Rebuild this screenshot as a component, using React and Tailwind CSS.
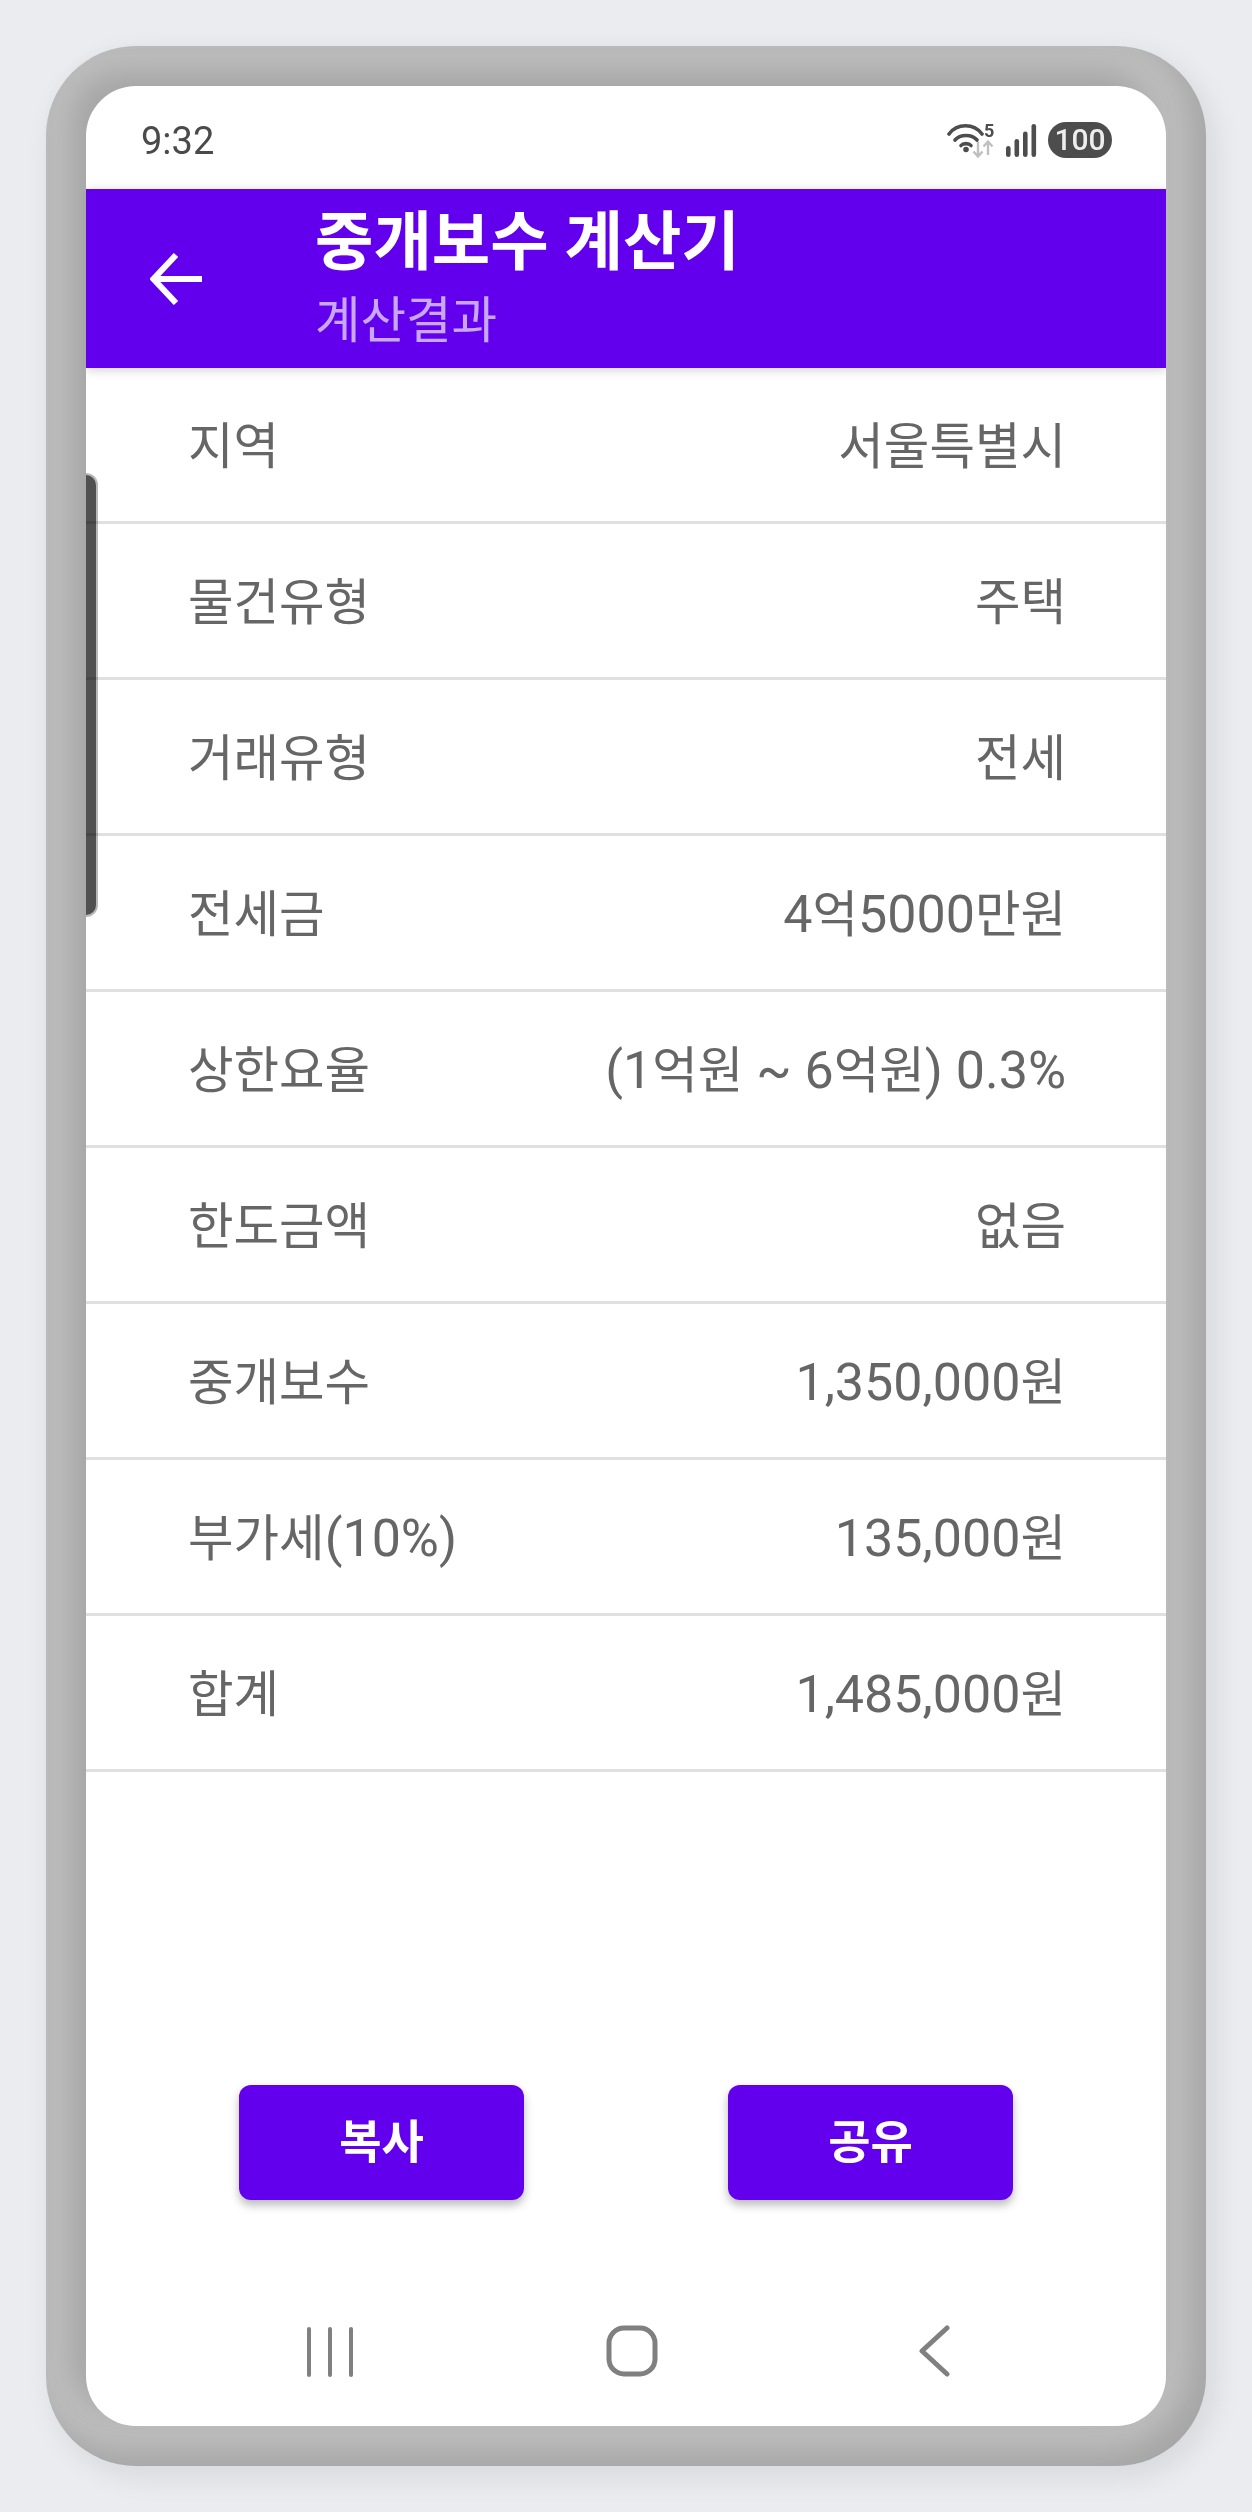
const rows = [
  ["지역", "서울특별시"],
  ["물건유형", "주택"],
  ["거래유형", "전세"],
  ["전세금", "4억5000만원"],
  ["상한요율", "(1억원 ~ 6억원) 0.3%"],
  ["한도금액", "없음"],
  ["중개보수", "1,350,000원"],
  ["부가세(10%)", "135,000원"],
  ["합계", "1,485,000원"]
];

// hangul runs sit a bit smaller than the latin digits next to them
function RowText({ children }) {
  return (
    <span className="text-[52px] leading-[60px]">
      {children.split(/([가-힣]+)/).map((part, i) =>
        /[가-힣]/.test(part) ? (
          <span key={i} className="text-[49.5px]">{part}</span>
        ) : (
          <span key={i}>{part}</span>
        )
      )}
    </span>
  );
}

function StatusIcons() {
  return (
    <div className="flex items-center">
      <div className="relative mr-[8px] h-[36px] w-[50px]">
        <svg width="50" height="36" viewBox="0 0 50 36" fill="none">
          <g stroke="#4d4d4d" strokeWidth="3.6" strokeLinecap="round">
            <path d="M2 12C10 1 27 1 35 12" />
            <path d="M8 18C13 12 25 12 30 18" />
            <path d="M14 23.5C16 21 22 21 24 23.5" />
          </g>
          <circle cx="19" cy="27.5" r="2.8" fill="#4d4d4d" />
          <g stroke="#c0c0c0" strokeWidth="2.4" fill="none">
            <path d="M31 20V34M26.5 29.5L31 34.5L35.5 29.5" />
            <path d="M41 33V20M36.5 24.5L41 19.5L45.5 24.5" />
          </g>
        </svg>
        <span className="absolute left-[37px] top-0 text-[18px] font-bold leading-[18px] text-[#4d4d4d]">5</span>
      </div>
      <svg width="32" height="36" viewBox="0 0 32 36" className="mr-[11px]">
        <g fill="#4d4d4d">
          <rect x="1" y="24" width="4.6" height="11" rx="2.3" />
          <rect x="9.5" y="17" width="4.6" height="18" rx="2.3" />
          <rect x="18" y="9.5" width="4.6" height="25.5" rx="2.3" />
          <rect x="26.5" y="2" width="4.6" height="33" rx="2.3" />
        </g>
      </svg>
      <div className="flex h-[36px] w-[64px] items-center justify-center rounded-full bg-[#4d4d4d] text-[30px] font-medium leading-none text-[#eeeeee]">100</div>
    </div>
  );
}

export default function App() {
  return (
    <div className="min-h-[2512px] bg-[#ebecf0] p-[46px] font-['Roboto','Noto_Sans_CJK_KR',sans-serif]">
      <div className="h-[2420px] w-[1160px] rounded-[90px] bg-[#bebebe] p-[40px] shadow-[inset_-15px_-15px_30px_rgba(0,0,0,0.13),8px_10px_30px_rgba(0,0,0,0.09)]">
        <div className="relative flex h-full flex-col overflow-hidden rounded-[50px] bg-white shadow-[-15px_-15px_30px_rgba(0,0,0,0.13)]">
          <div className="flex h-[103px] items-start justify-between pl-[55px] pr-[54px] pt-[36px]">
            <span className="text-[38px] leading-none text-[#4a4a4a]">9:32</span>
            <StatusIcons />
          </div>

          <header className="z-10 flex h-[179px] items-center bg-[#6200ee] shadow-[0_2px_10px_rgba(0,0,0,0.18)]">
            <div className="flex w-[229px] justify-start pl-[64px]">
              <svg width="52" height="52" viewBox="0 0 52 52" fill="none" stroke="white" strokeWidth="6">
                <path d="M52 26H4M26 2L3.5 26L26 50" />
              </svg>
            </div>
            <div>
              <h1 className="text-[63.5px] font-bold leading-[84px] text-white">중개보수 계산기</h1>
              <p className="text-[49.5px] leading-[72px] text-[#c9a8fb]">계산결과</p>
            </div>
          </header>

          <div className="flex-1">
            {rows.map(([label, value]) => (
              <div key={label} className="flex h-[156px] items-center justify-between border-b-[3px] border-[#e0e0e0] pl-[102px] pr-[100px] pt-[4px] text-[#666666]">
                <RowText>{label}</RowText>
                <RowText>{value}</RowText>
              </div>
            ))}
          </div>

          <div className="flex justify-between px-[153px]">
            <button className="h-[115px] w-[285px] rounded-[12px] bg-[#6200ee] text-[46px] font-bold text-white shadow-[0_5px_10px_rgba(0,0,0,0.28)]">복사</button>
            <button className="h-[115px] w-[285px] rounded-[12px] bg-[#6200ee] text-[46px] font-bold text-white shadow-[0_5px_10px_rgba(0,0,0,0.28)]">공유</button>
          </div>

          <nav className="ml-[93px] grid h-[226px] w-[906px] grid-cols-3 justify-items-center pt-[125px]">
            <svg width="48" height="52" viewBox="0 0 48 52" fill="none" stroke="#808080" strokeWidth="4" strokeLinecap="round">
              <path d="M3 4V50M24 4V50M45 4V50" />
            </svg>
            <svg width="52" height="52" viewBox="0 0 52 52" fill="none" stroke="#808080" strokeWidth="5">
              <rect x="3" y="3" width="46" height="46" rx="15" />
            </svg>
            <svg width="32" height="52" viewBox="0 0 32 52" fill="none" stroke="#808080" strokeWidth="5" strokeLinecap="round" strokeLinejoin="round">
              <path d="M29 3L4 26L29 49" />
            </svg>
          </nav>

          <div className="absolute left-0 top-[387px] h-[444px] w-[12px] rounded-r-[12px] border-y-2 border-r-2 border-[#b8b8b8] bg-[#505050] mix-blend-multiply" />
        </div>
      </div>
    </div>
  );
}
